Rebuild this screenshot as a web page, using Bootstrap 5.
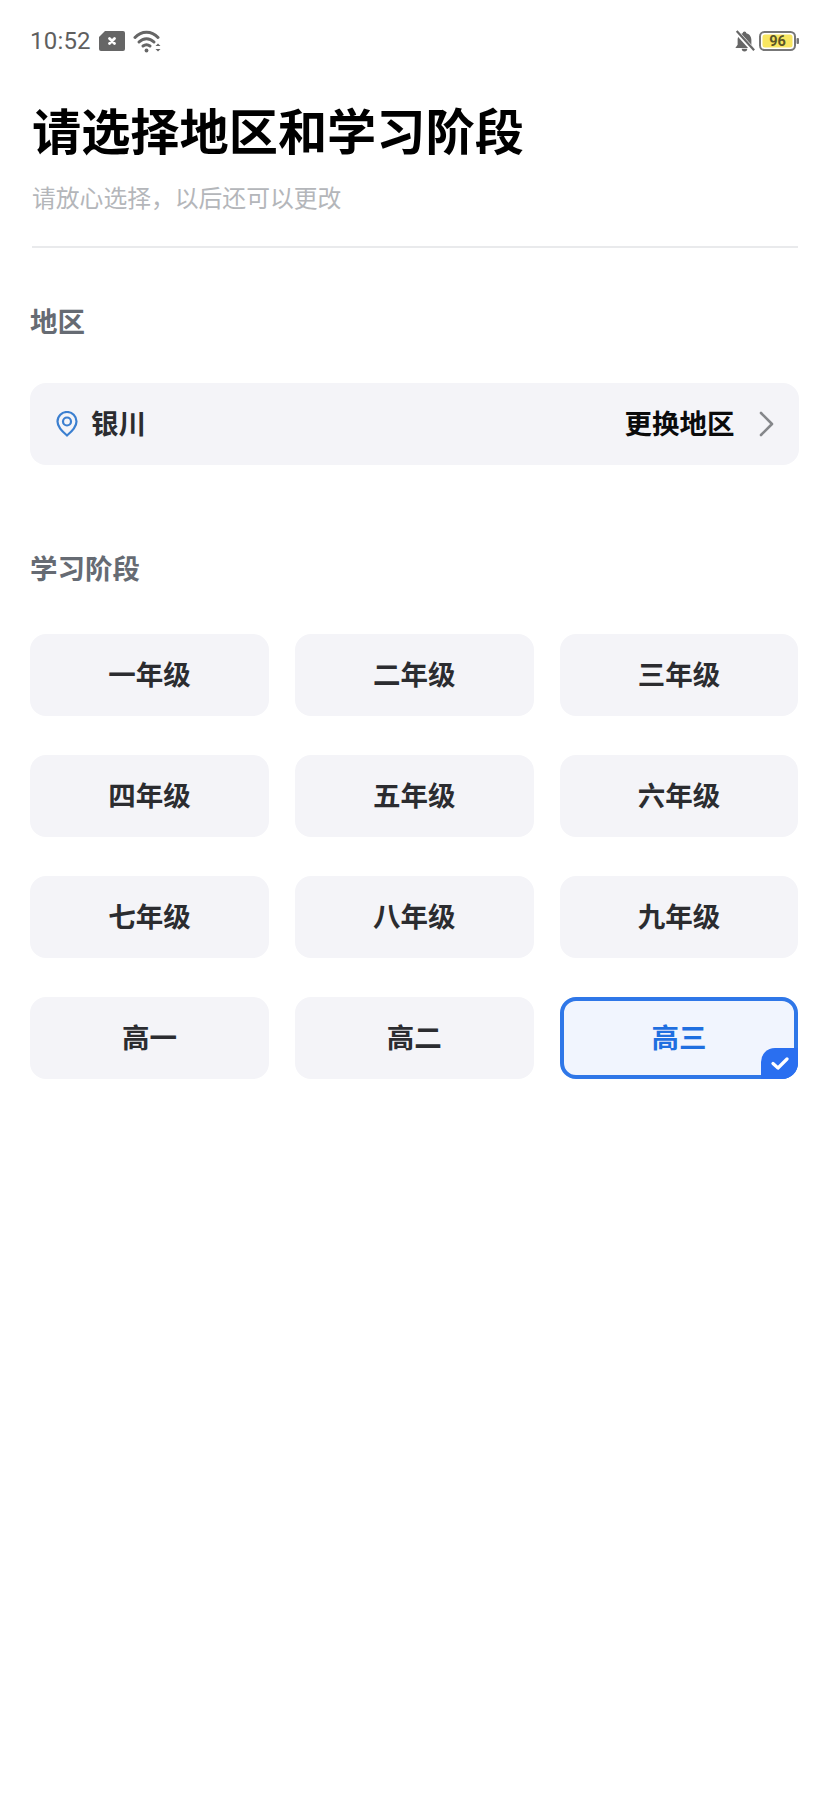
<!DOCTYPE html>
<html lang="zh-CN">
<head>
  <meta charset="UTF-8" />
  <meta name="viewport" content="width=device-width, initial-scale=1" />
  <title>请选择地区和学习阶段</title>
  <link href="https://cdn.jsdelivr.net/npm/bootstrap@5.3.0/dist/css/bootstrap.min.css" rel="stylesheet" />
  <style>
    body {
      font-family: "Noto Sans CJK SC", "Liberation Sans", sans-serif;
      background: #fff;
      width: 828px;
      height: 1794px;
      overflow: hidden;
    }
    .status-bar {
      height: 82px;
      padding: 0 29px 0 30px;
      color: #5f5f5f;
    }
    .status-time {
      font-family: Roboto, sans-serif;
      font-size: 24px;
      letter-spacing: .2px;
    }
    .page-head { padding: 0 30px 0 32px; }
    .page-title {
      font-size: 49.2px;
      font-weight: 700;
      line-height: 66px;
      color: #000;
      margin: 14px 0 0;
    }
    .page-sub {
      font-size: 23.8px;
      line-height: 34px;
      color: #b4b6ba;
      margin: 18px 0 0;
    }
    .head-line {
      height: 2px;
      background: #e9eaec;
      margin-top: 32px;
    }
    .main-area { padding: 0 29.5px 0 30px; }
    .sec-label {
      font-size: 27.5px;
      font-weight: 700;
      line-height: 40px;
      color: #666b73;
    }
    .sec-area { margin-top: 52px; }
    .sec-grade { margin-top: 82px; }
    .loc-card {
      height: 82px;
      margin-top: 43px;
      padding: 0 25px 0 26px;
      background: #f4f4f8;
      border-radius: 16px;
    }
    .loc-name {
      font-size: 27.5px;
      font-weight: 700;
      color: #2b2c30;
      margin-left: 13px;
      padding-bottom: 2px;
    }
    .loc-change {
      font-size: 27.5px;
      font-weight: 700;
      color: #0b0b0b;
      margin-right: 24px;
      padding-bottom: 2px;
    }
    .grade-grid {
      display: grid;
      grid-template-columns: repeat(3, 1fr);
      column-gap: 26px;
      row-gap: 39px;
      margin-top: 47px;
    }
    .grade-item {
      height: 82px;
      padding-bottom: 2px;
      background: #f4f4f8;
      border: 3px solid #f4f4f8;
      border-radius: 16px;
      font-size: 27.5px;
      font-weight: 700;
      color: #2b2c30;
    }
    .grade-item.picked {
      background: #f1f5fe;
      border: 4px solid #2f77e8;
      color: #1f6fe0;
    }
    .pick-tag {
      right: -4px;
      bottom: -4px;
      width: 37px;
      height: 31px;
      background: #2a6ff0;
      border-top-left-radius: 14px;
      border-bottom-right-radius: 16px;
    }
  </style>
</head>
<body>

  <!-- status bar -->
  <div class="status-bar d-flex align-items-center justify-content-between">
    <div class="d-flex align-items-center">
      <span class="status-time">10:52</span>
      <svg class="ms-2" width="27" height="20" viewBox="0 0 27 20">
        <path d="M6 0H24a2 2 0 0 1 2 2V18a2 2 0 0 1-2 2H2a2 2 0 0 1-2-2V6z" fill="#666"/>
        <path d="M10.500 7.500l5 5m0-5l-5 5" stroke="#fff" stroke-width="2.800" stroke-linecap="round"/>
      </svg>
      <svg style="margin-left:7px" width="28" height="23" viewBox="0 0 28 23" fill="none" stroke="#666" stroke-width="3" stroke-linecap="round">
        <path d="M2 7.500C8.500 .5 18.500 .5 25 7.500"/>
        <path d="M6 12C10.500 7.500 16.500 7.500 21 12"/>
        <path d="M10 16C12 14.500 15 14.500 17 16"/>
        <path d="M13.500 20.500v.1" stroke-width="3.800"/>
        <path d="M22.500 16l2.500-2.500 2.500 2.500zM22.500 19l2.500 2.500 2.500-2.500z" fill="#666" stroke="none"/>
      </svg>
    </div>
    <div class="d-flex align-items-center">
      <svg width="21" height="22" viewBox="0 0 22 24">
        <path d="M11 1.500a2 2 0 0 1 2 2C17 4.500 18.500 8 18.500 11v5l2.500 3.500H1l2.500-3.500v-5C3.500 8 5 4.500 9 3.500a2 2 0 0 1 2-2zM8 20.500h6a3 3 0 0 1-6 0z" fill="#666"/>
        <path d="M1.500 1l19 21" stroke="#fff" stroke-width="5"/>
        <path d="M2.500 1l19 21" stroke="#666" stroke-width="2.400"/>
      </svg>
      <svg style="margin-left:4px" width="40" height="20" viewBox="0 0 40 20">
        <rect x="1" y="1" width="35" height="18" rx="4.500" fill="#fff" stroke="#777" stroke-width="2"/>
        <rect x="3.500" y="3.500" width="30" height="13" rx="2.500" fill="#f8e660"/>
        <rect x="37.500" y="7" width="2.500" height="6" rx="1" fill="#777"/>
        <text x="18.500" y="15" text-anchor="middle" font-family="Roboto, sans-serif" font-size="14.500" font-weight="700" fill="#5a5528">96</text>
      </svg>
    </div>
  </div>

  <!-- title -->
  <div class="page-head">
    <h1 class="page-title">请选择地区和学习阶段</h1>
    <p class="page-sub">请放心选择，以后还可以更改</p>
    <div class="head-line"></div>
  </div>

  <div class="main-area">
    <div class="sec-label sec-area">地区</div>
    <div class="loc-card d-flex align-items-center">
      <svg width="22" height="26" viewBox="0 0 22 26" fill="none" stroke="#3b7fd0" stroke-width="2.200">
        <path d="M11 24.500C5 19.500 1.500 15.500 1.500 10.500a9.500 9.500 0 0 1 19 0c0 5-3.500 9-9.500 14z"/>
        <circle cx="11" cy="10.500" r="4"/>
      </svg>
      <span class="loc-name">银川</span>
      <span class="loc-change ms-auto">更换地区</span>
      <svg width="15" height="26" viewBox="0 0 15 26" fill="none" stroke="#85878b" stroke-width="2.600" stroke-linecap="round" stroke-linejoin="round">
        <path d="M2 2l11 11L2 24"/>
      </svg>
    </div>

    <div class="sec-label sec-grade">学习阶段</div>
    <div class="grade-grid" id="grades"></div>
  </div>

  <script>
    const grades = ["一年级", "二年级", "三年级", "四年级", "五年级", "六年级", "七年级", "八年级", "九年级", "高一", "高二", "高三"];
    const picked = "高三";
    const tag = `<span class="pick-tag position-absolute d-flex align-items-center justify-content-center">
        <svg width="18" height="13" viewBox="0 0 18 13" fill="none" stroke="#fff" stroke-width="3.200" stroke-linecap="round" stroke-linejoin="round"><path d="M2 6.500l5 4.500 9-9"/></svg>
      </span>`;
    document.getElementById("grades").innerHTML = grades.map(g => `
      <div class="grade-item position-relative d-flex align-items-center justify-content-center${g === picked ? " picked" : ""}">
        ${g}${g === picked ? tag : ""}
      </div>`).join("");
  </script>

  <script src="https://cdn.jsdelivr.net/npm/bootstrap@5.3.0/dist/js/bootstrap.bundle.min.js"></script>
</body>
</html>
